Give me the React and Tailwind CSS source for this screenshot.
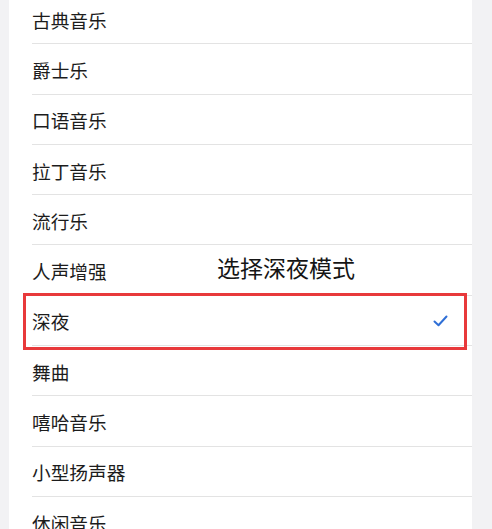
const items = [
  '古典音乐',
  '爵士乐',
  '口语音乐',
  '拉丁音乐',
  '流行乐',
  '人声增强',
  '深夜',
  '舞曲',
  '嘻哈音乐',
  '小型扬声器',
  '休闲音乐',
];

const Check = () => (
  <svg width="15" height="12" viewBox="0 0 15 12" fill="none">
    <path d="M1.5 6.5 L5.5 10.2 L13.5 1.5" stroke="#2f6fd6" strokeWidth="2" strokeLinecap="round" strokeLinejoin="round" />
  </svg>
);

const App = () => {
  return (
    <div
      className="w-[492px] h-[529px] overflow-hidden bg-[#f2f2f4] flex"
      style={{ fontFamily: '"Noto Sans CJK SC", "Noto Sans", sans-serif' }}
    >
      <div className="ml-[9px] w-[463px] bg-white pl-[23px] -mt-[6px] self-start">
        {items.map((name) => (
          <div
            key={name}
            className="relative h-[50.3px] border-b border-[#e3e3e3] flex items-center justify-between pt-[2px] pr-[24px] text-[18.7px] text-[#1c1c1c]"
          >
            <span>{name}</span>
            {name === '深夜' && (
              <>
                <Check />
                <div className="absolute -top-[3px] -bottom-[5px] -left-[9px] right-[5px] border-[3px] border-[#e8393b]" />
              </>
            )}
            {name === '人声增强' && (
              <div className="absolute left-[185px] top-[11px] text-[23px] leading-[23px] text-[#151515]">
                选择深夜模式
              </div>
            )}
          </div>
        ))}
      </div>
    </div>
  );
};

export default App;
